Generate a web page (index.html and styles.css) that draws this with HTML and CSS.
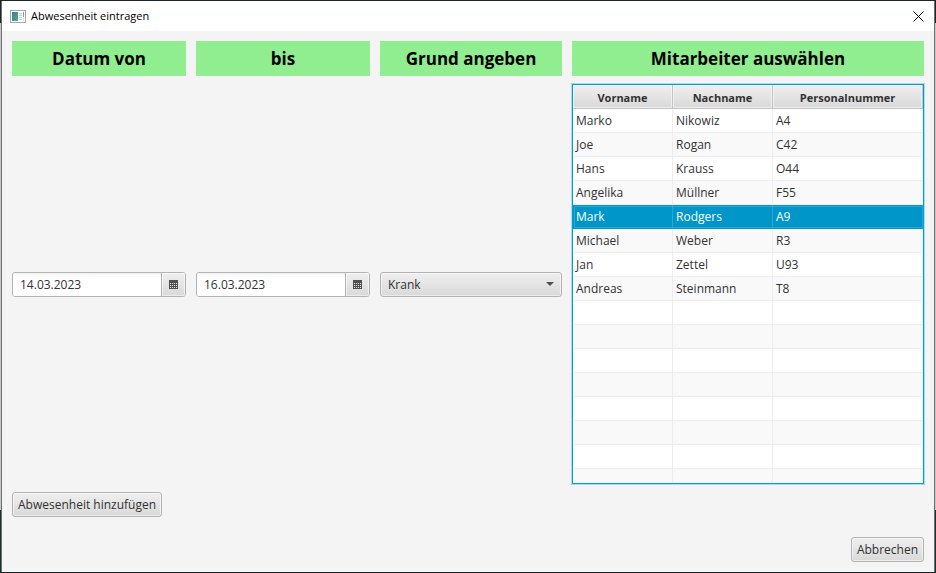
FILE: index.html
```html
<!DOCTYPE html>
<html lang="de">
<head>
<meta charset="utf-8">
<title>Abwesenheit eintragen</title>
<link rel="stylesheet" href="styles.css">
</head>
<body>
<div class="window">
  <header class="titlebar">
    <svg class="app-icon" viewBox="0 0 16 13" aria-hidden="true">
      <defs><linearGradient id="pane" x1="0" y1="0" x2="1" y2="1"><stop offset="0" stop-color="#3d75a8"/><stop offset="1" stop-color="#55b06c"/></linearGradient></defs>
      <rect x="0.5" y="0.5" width="15" height="12" fill="#fff" stroke="#a4a8ac"/>
      <rect x="2" y="2" width="6" height="9" fill="url(#pane)"/>
      <path d="M9 3.5h3M9 5.5h3M9 7.5h3M9 9.5h3" stroke="#c9cdd1"/>
      <path d="M13.500 2v5" stroke="#8d9aa5"/>
      <path d="M13.500 7v4" stroke="#dfe2e5"/>
    </svg>
    <h1 class="title">Abwesenheit eintragen</h1>
    <button class="close" type="button" aria-label="Schließen">
      <svg viewBox="0 0 11 11" aria-hidden="true"><path d="M.5 .5l10 10M10.500 .5l-10 10" stroke="#000" fill="none"/></svg>
    </button>
  </header>
  <main class="form">
    <label class="heading" for="von">Datum von</label>
    <label class="heading" for="bis">bis</label>
    <label class="heading" for="grund">Grund angeben</label>
    <h2 class="heading" id="mitarbeiter">Mitarbeiter auswählen</h2>

    <div class="date">
      <input id="von" type="text" value="14.03.2023">
      <button type="button" aria-label="Kalender öffnen">
        <svg viewBox="0 0 9 9" aria-hidden="true"><path d="M0 0h9v9H0z" fill="#505050"/><path d="M1 3.500h7M1 5.500h7M1 7.500h7" stroke="#e6e6e6" stroke-dasharray="1 1"/></svg>
      </button>
    </div>
    <div class="date">
      <input id="bis" type="text" value="16.03.2023">
      <button type="button" aria-label="Kalender öffnen">
        <svg viewBox="0 0 9 9" aria-hidden="true"><path d="M0 0h9v9H0z" fill="#505050"/><path d="M1 3.500h7M1 5.500h7M1 7.500h7" stroke="#e6e6e6" stroke-dasharray="1 1"/></svg>
      </button>
    </div>
    <div class="combo">
      <select id="grund"><option>Krank</option></select>
      <svg class="arrow" viewBox="0 0 8 4" aria-hidden="true"><path d="M0 0h8L4 4z" fill="#505050"/></svg>
    </div>
    <div class="list">
      <table aria-labelledby="mitarbeiter">
        <colgroup><col class="name"><col class="name"><col></colgroup>
        <thead><tr><th>Vorname</th><th>Nachname</th><th>Personalnummer</th></tr></thead>
        <tbody>
          <tr><td>Marko</td><td>Nikowiz</td><td>A4</td></tr>
          <tr><td>Joe</td><td>Rogan</td><td>C42</td></tr>
          <tr><td>Hans</td><td>Krauss</td><td>O44</td></tr>
          <tr><td>Angelika</td><td>Müllner</td><td>F55</td></tr>
          <tr class="selected" aria-selected="true"><td>Mark</td><td>Rodgers</td><td>A9</td></tr>
          <tr><td>Michael</td><td>Weber</td><td>R3</td></tr>
          <tr><td>Jan</td><td>Zettel</td><td>U93</td></tr>
          <tr><td>Andreas</td><td>Steinmann</td><td>T8</td></tr>
          <tr><td></td><td></td><td></td></tr>
          <tr><td></td><td></td><td></td></tr>
          <tr><td></td><td></td><td></td></tr>
          <tr><td></td><td></td><td></td></tr>
          <tr><td></td><td></td><td></td></tr>
          <tr><td></td><td></td><td></td></tr>
          <tr><td></td><td></td><td></td></tr>
          <tr><td></td><td></td><td></td></tr>
        </tbody>
      </table>
    </div>
    <div class="actions"><button class="button" type="button">Abwesenheit hinzufügen</button></div>
  </main>
  <footer class="footer"><button class="button" type="button">Abbrechen</button></footer>
</div>
</body>
</html>
```
FILE: styles.css
```css
* { box-sizing: border-box; }

body {
  margin: 0;
  height: 100vh;
  padding: 1px;
  background: linear-gradient(#1c2424 0 4%, #c8c8c8 4% 89%, #18302c 89%);
  color: #323232;
  font: 12px/16px "Open Sans", "Noto Sans", sans-serif;
}

button, input, select { font: inherit; color: inherit; }

.window {
  display: flex;
  flex-direction: column;
  height: 100%;
  border: solid #6c6f70;
  border-width: 0 1px;
  background: #f4f4f4;
  box-shadow: 0 -1px #1c2424, 0 1px #1c2424;
}

.titlebar {
  display: flex;
  align-items: center;
  height: 30px;
  padding: 0 8px;
  background: #fff;
  color: #000;
}

.app-icon { width: 16px; height: 13px; margin-right: 5px; }
.title { flex: 1; margin: 0; font-size: 11px; font-weight: 400; }

.close {
  display: flex;
  padding: 2px;
  border: 0;
  background: none;
}
.close svg { width: 11px; height: 11px; }

.form {
  flex: 1;
  min-height: 0;
  display: grid;
  grid-template-columns: 174fr 174fr 182fr 352fr;
  grid-template-rows: auto minmax(0, 1fr) auto;
  gap: 8px 10px;
  padding: 10px 10px 20px;
  align-items: center;
}

.heading {
  margin: 0;
  padding: 6px 0 5px;
  background: #90ee90;
  color: #000;
  font-size: 17px;
  line-height: 24px;
  font-weight: 700;
  text-align: center;
  white-space: nowrap;
}

.date, .button, .combo select {
  height: 25px;
  border: 1px solid #b3b3b3;
  border-radius: 3px;
}

.button, .combo select, .date button, th {
  background: linear-gradient(#efefef, #d9d9d9);
  box-shadow: inset 0 0 0 1px rgba(255, 255, 255, 0.5);
}

.date { display: flex; background: #fff; overflow: hidden; }

.date input {
  flex: 1;
  min-width: 0;
  padding: 2px 7px 0;
  border: 0;
  outline: 0;
  background: linear-gradient(#f3f3f3, #fff 4px);
}

.date button {
  display: flex;
  align-items: center;
  justify-content: center;
  width: 24px;
  padding: 0;
  border: 0;
  border-left: 1px solid #b3b3b3;
}
.date svg { width: 9px; height: 9px; }

.combo { display: grid; align-items: center; }
.combo > * { grid-area: 1 / 1; }
.combo select {
  width: 100%;
  padding: 2px 7px 0;
  appearance: none;
}
.arrow {
  justify-self: end;
  width: 8px;
  height: 4px;
  margin-right: 8px;
  pointer-events: none;
}

.list {
  align-self: stretch;
  min-height: 0;
  overflow: hidden;
  border: 1px solid #039ed3;
  box-shadow: 0 0 0 1px #a8dcec;
  background: #fff;
}

table {
  width: 100%;
  table-layout: fixed;
  border-collapse: separate;
  border-spacing: 0;
}
.name { width: 100px; }

th, td {
  height: 24px;
  padding: 0 3px;
  border: solid #ededed;
  border-width: 0 1px 1px 0;
  text-align: left;
}
th {
  padding-top: 2px;
  border-color: #c3c3c3;
  font-size: 11px;
  text-align: center;
}

tbody tr:nth-child(even) { background: #f9f9f9; }

tbody .selected { background: #0096c9; color: #fff; }
.selected td {
  border-color: #0096c9;
  border-right-color: #2ba7d2;
  box-shadow: inset 0 1px #0096c9, inset 0 2px #2ba7d2, inset 0 -1px #2ba7d2;
}
.selected td:first-child {
  box-shadow: inset 0 1px #0096c9, inset 1px 0 #0096c9, inset 2px 2px #2ba7d2, inset 0 -1px #2ba7d2;
}

.button { padding: 0 5px; }

.footer {
  display: flex;
  justify-content: flex-end;
  padding: 0 10px 10px;
}
```
